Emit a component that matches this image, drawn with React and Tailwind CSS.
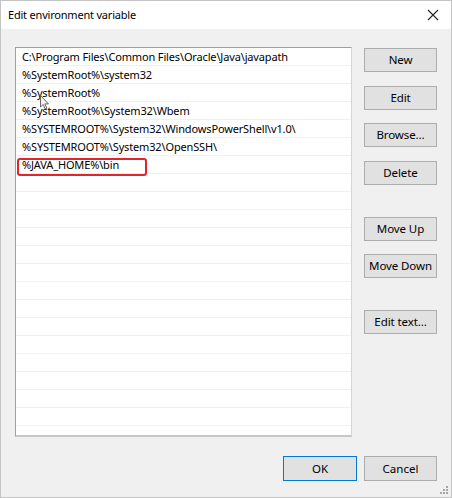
import React from "react";

const rows = [
  "C:\\Program Files\\Common Files\\Oracle\\Java\\javapath",
  "%SystemRoot%\\system32",
  "%SystemRoot%",
  "%SystemRoot%\\System32\\Wbem",
  "%SYSTEMROOT%\\System32\\WindowsPowerShell\\v1.0\\",
  "%SYSTEMROOT%\\System32\\OpenSSH\\",
  "%JAVA_HOME%\\bin",
];

function Btn({ children, className = "" }) {
  return (
    <div
      className={
        "w-[73px] h-[24px] flex items-center justify-center bg-[#e1e1e1] border border-[#adadad] text-[11.5px] tracking-[-0.1px] text-black " +
        className
      }
    >
      {children}
    </div>
  );
}

export default function App() {
  const total = 22;
  const list = Array.from({ length: total }, (_, i) => rows[i] ?? "");
  return (
    <div
      className="w-[452px] h-[498px] bg-[#f0f0f0] border border-[#c4c4c4] flex flex-col relative overflow-hidden"
      style={{ fontFamily: '"Noto Sans", "Open Sans", sans-serif' }}
    >
      <div className="h-[28px] bg-white flex items-center justify-between pl-[7px] pr-[10px] shrink-0">
        <span className="text-[11px] tracking-[-0.2px] text-black">Edit environment variable</span>
        <svg width="14" height="14" viewBox="0 0 14 14" className="mr-[1px]">
          <path d="M2 2 L12 12 M12 2 L2 12" stroke="#222" strokeWidth="1.1" fill="none" />
        </svg>
      </div>

      <div className="flex flex-row pl-[14px] pt-[18px]">
        <div className="w-[337px] h-[390px] bg-white border-t border-l border-[#a0a0a0] border-r border-r-[#d6d6d6] border-b-2 border-b-[#c8c8c8] overflow-hidden relative">
          {list.map((t, i) => (
            <div
              key={i}
              className="h-[18px] border-b border-[#f0f0f0] flex items-center pl-[6px] text-[11px] tracking-[-0.15px] text-black whitespace-nowrap leading-none"
            >
              {t}
            </div>
          ))}
          <div className="absolute left-[1px] top-[110px] w-[130px] h-[18px] border-2 border-[#e0262b] rounded-[3px]" />
          <svg
            className="absolute left-[24px] top-[47px]"
            width="10"
            height="16"
            viewBox="0 0 10 16"
          >
            <path
              d="M0.5 0.5 L0.5 12 L3.2 9.5 L5.2 14 L6.8 13.3 L4.9 8.9 L8.5 8.9 Z"
              fill="#f5f5f5"
              stroke="#555"
              strokeWidth="0.9"
            />
          </svg>
        </div>

        <div className="flex flex-col ml-[12px]">
          <Btn className="mt-[1px]">New</Btn>
          <Btn className="mt-[14px]">Edit</Btn>
          <Btn className="mt-[13px]">Browse...</Btn>
          <Btn className="mt-[14px]">Delete</Btn>
          <Btn className="mt-[32px]">Move Up</Btn>
          <Btn className="mt-[13px]">Move Down</Btn>
          <Btn className="mt-[32px]">Edit text...</Btn>
        </div>
      </div>

      <div className="flex flex-row justify-end gap-[7px] pr-[14px] mt-[19px]">
        <div className="w-[74px] h-[25px] flex items-center justify-center bg-[#e1e1e1] border border-[#0078d7] text-[11.5px] text-black">
          OK
        </div>
        <div className="w-[73px] h-[25px] flex items-center justify-center bg-[#e1e1e1] border border-[#adadad] text-[11.5px] text-black">
          Cancel
        </div>
      </div>

      <svg className="absolute right-[2px] bottom-[2px]" width="10" height="10" viewBox="0 0 10 10">
        <rect x="7" y="1" width="2" height="2" fill="#a8a8a8" />
        <rect x="4" y="4" width="2" height="2" fill="#a8a8a8" />
        <rect x="7" y="4" width="2" height="2" fill="#a8a8a8" />
        <rect x="1" y="7" width="2" height="2" fill="#a8a8a8" />
        <rect x="4" y="7" width="2" height="2" fill="#a8a8a8" />
        <rect x="7" y="7" width="2" height="2" fill="#a8a8a8" />
      </svg>
    </div>
  );
}
